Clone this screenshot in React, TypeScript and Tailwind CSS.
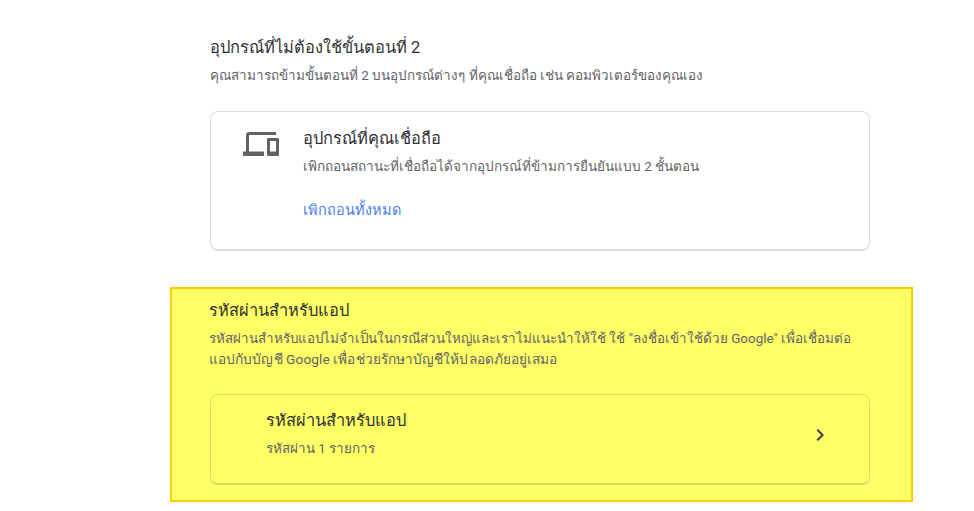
import React from 'react';

const font = { fontFamily: 'Roboto, "Noto Sans", "Liberation Sans", sans-serif' };

function DevicesIcon() {
  return (
    <svg width="36" height="36" viewBox="0 0 24 24" fill="#5f6368" className="shrink-0">
      <path d="M4 6h18V4H4c-1.1 0-2 .9-2 2v11H0v3h14v-3H4V6zm19 2h-6c-.55 0-1 .45-1 1v10c0 .55.45 1 1 1h6c.55 0 1-.45 1-1V9c0-.55-.45-1-1-1zm-1 9h-4v-7h4v7z" />
    </svg>
  );
}

function ChevronIcon() {
  return (
    <svg width="24" height="24" viewBox="0 0 24 24" fill="#3c4043" className="shrink-0 mt-[14px]">
      <path d="M10 6L8.59 7.41 13.17 12l-4.58 4.59L10 18l6-6z" />
    </svg>
  );
}

export default function App() {
  return (
    <div className="min-h-[511px] bg-white text-[#2f3033] overflow-hidden" style={font}>
      <div className="ml-[210px] w-[660px] pt-[36px]">
        <h2 className="text-[16.4px] leading-[24px] font-normal">อุปกรณ์ที่ไม่ต้องใช้ขั้นตอนที่ 2</h2>
        <p className="mt-[6px] text-[13.45px] leading-[20px] text-[#5f6368]">
          คุณสามารถข้ามขั้นตอนที่ 2 บนอุปกรณ์ต่างๆ ที่คุณเชื่อถือ เช่น คอมพิวเตอร์ของคุณเอง
        </p>
        <div className="mt-[25px] h-[140px] rounded-[8px] border border-[#dadce0] border-b-2 flex pl-[32px] pt-[14px]">
          <DevicesIcon />
          <div className="ml-[24px]">
            <div className="text-[16.4px] leading-[24px] mt-[1px]">อุปกรณ์ที่คุณเชื่อถือ</div>
            <div className="mt-[5px] text-[13.55px] leading-[20px] text-[#5f6368]">
              เพิกถอนสถานะที่เชื่อถือได้จากอุปกรณ์ที่ข้ามการยืนยันแบบ 2 ชั้นตอน
            </div>
            <div className="mt-[25px] text-[14.5px] leading-[20px] text-[#4d7ef0]">เพิกถอนทั้งหมด</div>
          </div>
        </div>
      </div>
      <div className="ml-[170px] mt-[36px] w-[743px] h-[215px] bg-[#ffff66] border-2 border-[#ffcc00] pl-[37px] pt-[10px]">
        <h2 className="text-[16.4px] leading-[24px] font-normal">รหัสผ่านสำหรับแอป</h2>
        <p className="mt-[6px] w-[680px] text-[13.4px] leading-[20px] text-[#5f6368]">
          รหัสผ่านสำหรับแอปไม่จำเป็นในกรณีส่วนใหญ่และเราไม่แนะนำให้ใช้ ใช้ "ลงชื่อเข้าใช้ด้วย Google" เพื่อเชื่อมต่อ
          <br />
          <span className="text-[13.7px] tracking-[0.08px]">แอปกับบัญชี Google เพื่อช่วยรักษาบัญชีให้ปลอดภัยอยู่เสมอ</span>
        </p>
        <div className="mt-[24px] ml-[1px] w-[660px] h-[91px] rounded-[8px] border border-[#dadc60] border-b-2 flex items-start pl-[55px] pr-[37px] pt-[14px]">
          <div className="flex-1">
            <div className="text-[16.4px] leading-[24px]">รหัสผ่านสำหรับแอป</div>
            <div className="mt-[6px] text-[13.4px] leading-[20px] text-[#5f6368]">รหัสผ่าน 1 รายการ</div>
          </div>
          <ChevronIcon />
        </div>
      </div>
    </div>
  );
}
